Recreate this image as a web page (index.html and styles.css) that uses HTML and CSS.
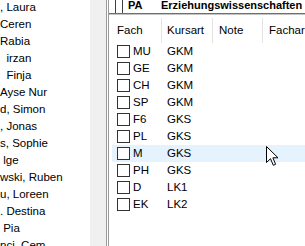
FILE: index.html
```html
<!DOCTYPE html>
<html lang="de">
<head>
  <meta charset="UTF-8">
  <title>Kurswahl</title>
  <link rel="stylesheet" href="styles.css">
</head>
<body>

<div class="names">
  <div class="name">, Laura</div>
  <div class="name">Ceren</div>
  <div class="name">Rabia</div>
  <div class="name">  irzan</div>
  <div class="name">  Finja</div>
  <div class="name">Ayse Nur</div>
  <div class="name">d, Simon</div>
  <div class="name">, Jonas</div>
  <div class="name">s, Sophie</div>
  <div class="name"> lge</div>
  <div class="name">wski, Ruben</div>
  <div class="name">u, Loreen</div>
  <div class="name">. Destina</div>
  <div class="name"> Pia</div>
  <div class="name">nci, Cem</div>
</div>
<div class="track"></div>

<div class="pane">
  <div class="groupbar">
    <div class="gcell"></div>
    <div class="gcell"></div>
    <div class="gkey">PA</div>
    <div class="gname">Erziehungswissenschaften</div>
  </div>

  <div class="list">
    <div class="head">
      <div class="col c-fach">Fach</div>
      <div class="col c-art">Kursart</div>
      <div class="col c-note">Note</div>
      <div class="col c-fa">Facharbeit</div>
    </div>

    <div class="row"><div class="c-fach"><span class="box"></span>MU</div><div class="c-art">GKM</div></div>
    <div class="row"><div class="c-fach"><span class="box"></span>GE</div><div class="c-art">GKM</div></div>
    <div class="row"><div class="c-fach"><span class="box"></span>CH</div><div class="c-art">GKM</div></div>
    <div class="row"><div class="c-fach"><span class="box"></span>SP</div><div class="c-art">GKM</div></div>
    <div class="row"><div class="c-fach"><span class="box"></span>F6</div><div class="c-art">GKS</div></div>
    <div class="row"><div class="c-fach"><span class="box"></span>PL</div><div class="c-art">GKS</div></div>
    <div class="row hover"><div class="c-fach"><span class="box"></span>M</div><div class="c-art">GKS</div></div>
    <div class="row"><div class="c-fach"><span class="box"></span>PH</div><div class="c-art">GKS</div></div>
    <div class="row"><div class="c-fach"><span class="box"></span>D</div><div class="c-art">LK1</div></div>
    <div class="row"><div class="c-fach"><span class="box"></span>EK</div><div class="c-art">LK2</div></div>
  </div>
</div>

<svg class="cursor" width="13" height="21" viewBox="0 0 13 21">
  <path d="M0.5 0.5 L0.5 16.5 L4.5 12.7 L7.3 19.3 L9.6 18.3 L6.9 11.8 L12 11.8 Z" fill="#fff" stroke="#000" stroke-width="1" stroke-linejoin="miter"/>
</svg>

</body>
</html>
```

FILE: styles.css
```css
body {
  margin: 0;
  width: 305px;
  height: 246px;
  overflow: hidden;
  display: flex;
  font-family: "Liberation Sans", Arial, sans-serif;
  font-size: 11.5px;
  color: #000;
  background: #fff;
}
.names {
  flex: none;
  width: 90px;
  margin-top: -1px;
  overflow: hidden;
}
.name {
  height: 17px;
  line-height: 17px;
  white-space: pre;
}
.track {
  flex: none;
  width: 16px;
  background: #f0f0f0;
}
.pane {
  flex: 1;
  min-width: 0;
  overflow: hidden;
  border-left: 3px double #9a9a9a;
  display: flex;
  flex-direction: column;
}
.groupbar {
  flex: none;
  height: 13px;
  display: flex;
  border-bottom: 1px solid #6f6f6f;
  box-shadow: 0 1px 0 #c4c4c4;
  font-weight: bold;
  font-size: 11px;
  line-height: 11px;
  color: #000;
  white-space: nowrap;
}
.gcell {
  flex: none;
  width: 6px;
  border-right: 1px solid #404040;
}
.gkey {
  flex: none;
  width: 33px;
  padding-left: 5px;
}
.list {
  margin-left: 3px;
  padding-top: 4px;
}
.head {
  display: flex;
  height: 25px;
  line-height: 25px;
  white-space: nowrap;
}
.col {
  flex: none;
  border-right: 1px solid #e3e3e3;
}
.c-fach {
  flex: none;
  width: 44px;
  padding-left: 5px;
  display: flex;
  align-items: center;
}
.c-art {
  flex: none;
  width: 45px;
  padding-left: 5px;
}
.c-note {
  width: 43px;
  padding-left: 6px;
}
.c-fa {
  padding-left: 6px;
  border-right: none;
}
.row {
  display: flex;
  height: 17px;
  line-height: 17px;
}
.row .c-fach {
  width: 45px;
}
.row .c-art {
  width: 45px;
}
.hover {
  background: #e5f3ff;
}
.box {
  flex: none;
  width: 11px;
  height: 11px;
  border: 1px solid #333;
  background: #fff;
  margin-right: 3px;
}
.cursor {
  position: absolute;
  left: 266px;
  top: 146px;
}
```
